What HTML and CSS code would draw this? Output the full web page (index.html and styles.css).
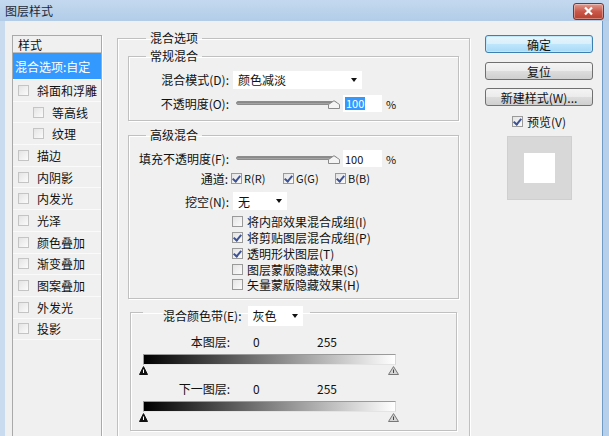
FILE: index.html
```html
<!DOCTYPE html>
<html lang="zh-CN">
<head>
  <meta charset="UTF-8">
  <title>图层样式</title>
  <link rel="stylesheet" href="styles.css">
</head>
<body>
  <div class="window">
    <div class="titlebar">
      <span class="title">图层样式</span>
      <span class="close">
        <svg width="11" height="10" viewBox="0 0 11 10"><path d="M2 1.5 L9 8.5 M9 1.5 L2 8.5" stroke="#fff" stroke-width="2.2"/></svg>
      </span>
    </div>
    <div class="frame">
      <div class="client">

        <ul class="styles">
          <li class="head">样式</li>
          <li class="sel">混合选项:自定</li>
          <li><span class="cb"></span>斜面和浮雕</li>
          <li class="sub"><span class="cb"></span>等高线</li>
          <li class="sub"><span class="cb"></span>纹理</li>
          <li><span class="cb"></span>描边</li>
          <li><span class="cb"></span>内阴影</li>
          <li><span class="cb"></span>内发光</li>
          <li><span class="cb"></span>光泽</li>
          <li><span class="cb"></span>颜色叠加</li>
          <li><span class="cb"></span>渐变叠加</li>
          <li><span class="cb"></span>图案叠加</li>
          <li><span class="cb"></span>外发光</li>
          <li><span class="cb"></span>投影</li>
        </ul>

        <fieldset class="group outer">
          <legend>混合选项</legend>

          <fieldset class="group normal">
            <legend>常规混合</legend>
            <div class="row first">
              <label class="lbl">混合模式(D):</label>
              <span class="select wide">颜色减淡<i class="arrow"></i></span>
            </div>
            <div class="row">
              <label class="lbl">不透明度(O):</label>
              <span class="slider"><span class="track"></span><span class="thumb"><svg width="12" height="9" viewBox="0 0 12 9"><path d="M0.5 8.5 L0.5 4.5 L6 0.7 L11.5 4.5 L11.5 8.5 Z" fill="#f4f4f4" stroke="#8a8a8a"/></svg></span></span>
              <span class="num"><span class="hl">100</span></span>
              <span class="pct">%</span>
            </div>
          </fieldset>

          <fieldset class="group advanced">
            <legend>高级混合</legend>
            <div class="row first">
              <label class="lbl">填充不透明度(F):</label>
              <span class="slider"><span class="track"></span><span class="thumb"><svg width="12" height="9" viewBox="0 0 12 9"><path d="M0.5 8.5 L0.5 4.5 L6 0.7 L11.5 4.5 L11.5 8.5 Z" fill="#f4f4f4" stroke="#8a8a8a"/></svg></span></span>
              <span class="num">100</span>
              <span class="pct">%</span>
            </div>
            <div class="row channels">
              <label class="lbl">通道:</label>
              <span class="chk"><span class="cb on"></span>R(R)</span>
              <span class="chk"><span class="cb on"></span>G(G)</span>
              <span class="chk"><span class="cb on"></span>B(B)</span>
            </div>
            <div class="row knock">
              <label class="lbl">挖空(N):</label>
              <span class="select narrow">无<i class="arrow"></i></span>
            </div>
            <div class="options">
              <span class="opt"><span class="cb"></span>将内部效果混合成组(I)</span>
              <span class="opt"><span class="cb on"></span>将剪贴图层混合成组(P)</span>
              <span class="opt"><span class="cb on"></span>透明形状图层(T)</span>
              <span class="opt"><span class="cb"></span>图层蒙版隐藏效果(S)</span>
              <span class="opt"><span class="cb"></span>矢量蒙版隐藏效果(H)</span>
            </div>
          </fieldset>

          <fieldset class="group band">
            <legend><span class="band-lbl">混合颜色带(E):</span><span class="select gray">灰色<i class="arrow"></i></span></legend>
            <div class="row lvl first">
              <label class="lbl">本图层:</label>
              <span class="v0">0</span>
              <span class="v255">255</span>
            </div>
            <div class="ramp"></div>
            <div class="marks">
              <svg width="9" height="9" viewBox="0 0 9 9"><path d="M4.5 0.6 L8.5 8.5 L0.5 8.5 Z" fill="#111" stroke="#111"/><path d="M4.5 3.5 V7" stroke="#fff"/></svg>
              <svg width="11" height="9" viewBox="0 0 11 9"><path d="M5.5 0.6 L10.5 8.5 L0.5 8.5 Z" fill="#d6d6d6" stroke="#777"/><path d="M5.5 3.5 V7" stroke="#444"/></svg>
            </div>
            <div class="row lvl">
              <label class="lbl">下一图层:</label>
              <span class="v0">0</span>
              <span class="v255">255</span>
            </div>
            <div class="ramp"></div>
            <div class="marks">
              <svg width="9" height="9" viewBox="0 0 9 9"><path d="M4.5 0.6 L8.5 8.5 L0.5 8.5 Z" fill="#111" stroke="#111"/><path d="M4.5 3.5 V7" stroke="#fff"/></svg>
              <svg width="11" height="9" viewBox="0 0 11 9"><path d="M5.5 0.6 L10.5 8.5 L0.5 8.5 Z" fill="#d6d6d6" stroke="#777"/><path d="M5.5 3.5 V7" stroke="#444"/></svg>
            </div>
          </fieldset>
        </fieldset>

        <div class="side">
          <button class="btn default">确定</button>
          <button class="btn">复位</button>
          <button class="btn">新建样式(W)...</button>
          <span class="preview-chk"><span class="cb on"></span>预览(V)</span>
          <div class="preview"><div class="swatch"></div></div>
        </div>

      </div>
    </div>
  </div>
</body>
</html>
```

FILE: styles.css
```css
* { box-sizing: border-box; margin: 0; padding: 0; }
html, body {
  width: 609px; height: 436px;
  overflow: hidden;
  font-family: "Noto Sans CJK SC", "Noto Sans", sans-serif;
  font-size: 12px;
  color: #111;
  background: #f0f0f0;
}
.window {
  width: 609px; height: 436px;
  display: flex; flex-direction: column;
}
.titlebar {
  height: 21px;
  flex: none;
  display: flex; align-items: center; justify-content: space-between;
  padding: 0 5px 0 5px;
  background: linear-gradient(#c4d9ef, #b2cce8);
}
.title {
  color: #1c2a3c;
  font-size: 12px;
  line-height: 14px;
}
.close {
  width: 31px; height: 17px;
  margin-top: 1px;
  display: flex; align-items: center; justify-content: center;
  border: 1px solid #7a3430;
  border-radius: 3px;
  background: linear-gradient(#e09c91, #c9584a 50%, #b8402f);
  box-shadow: inset 0 0 0 1px rgba(255,255,255,0.35);
}
.frame {
  flex: 1;
  display: flex;
  border-left: 5px solid #c9dbef;
  border-right: 6px solid #b6cfea;
}
.client {
  flex: 1;
  display: flex; align-items: flex-start;
  padding: 10px 0 0 7px;
  background: #f0f0f0;
  border-right: 1px solid #6f9bc4;
}

/* style list */
.styles {
  list-style: none;
  width: 90px;
  height: 420px;
  margin-top: 4px;
  border: 1px solid #a9a9a9;
  box-shadow: 1px 1px 0 #fff;
  background: #f0f0f0;
}
.styles li {
  height: 21.7px;
  display: flex; align-items: center;
  padding-left: 5px;
  border-bottom: 1px solid #fafafa;
  white-space: nowrap;
}
.styles li.head {
  height: 17px;
  padding-left: 5px;
  border-bottom: 1px solid #bdbdbd;
}
.styles li.sel {
  height: 27px;
  padding-left: 2px;
  background: #3399ff;
  color: #fff;
}
.styles li.sub { padding-left: 20px; }
.styles .cb { margin-right: 8px; border-color: #c4c4c4; }

/* checkbox */
.cb {
  display: inline-block;
  flex: none;
  width: 11px; height: 11px;
  border: 1px solid #9a9a9a;
  background: linear-gradient(135deg, #e4e4e4, #fbfbfb);
  position: relative;
}
.cb.on::after {
  content: "";
  position: absolute;
  left: 2px; top: 0px;
  width: 3px; height: 6px;
  border: solid #3d5396;
  border-width: 0 2px 2px 0;
  transform: rotate(40deg);
}

/* group boxes */
.group {
  border: 1px solid #c0c0c0;
  box-shadow: inset 1px 1px 0 #fff, 1px 1px 0 #fff;
}
.group legend {
  line-height: 14px;
  padding: 0 4px;
  margin-left: 17px;
}
.outer {
  width: 353px;
  height: 420px;
  margin-left: 15px;
  padding: 4px 10px 0 10px;
}
.outer > legend { margin-left: 18px; }
.normal { padding: 0 0 8px 0; }
.advanced { margin-top: 7px; padding: 0 0 5px 0; }
.band { margin: 1px 2px 0 2px; padding: 0 0 8px 0; }

.row {
  display: flex; align-items: center;
  margin-top: 7px;
  height: 17px;
}
.row.first { margin-top: 8px; }
.lbl {
  width: 100px;
  text-align: right;
  margin-right: 4px;
  white-space: nowrap;
}
.select {
  height: 18px;
  display: flex; align-items: center; justify-content: space-between;
  padding: 0 5px;
  background: #fff;
}
.select.wide { width: 129px; }
.select.narrow { width: 54px; }
.select.gray { width: 55px; height: 20px; }
.arrow {
  width: 0; height: 0;
  border-left: 3.5px solid transparent;
  border-right: 3.5px solid transparent;
  border-top: 4px solid #111;
}
.slider {
  width: 104px; height: 17px;
  position: relative;
}
.track {
  position: absolute;
  left: 3px; right: 0; top: 6px;
  height: 4px;
  border-radius: 2px;
  background: linear-gradient(#7d7d7d, #b0b0b0);
  border: 1px solid #8c8c8c;
}
.thumb {
  position: absolute;
  left: 95px; top: 5px;
  line-height: 0;
}
.num {
  width: 39px; height: 17px;
  margin-left: 6px;
  padding-left: 2px;
  display: flex; align-items: center;
  background: #fff;
  font-size: 11px;
}
.hl { background: #3399ff; color: #fff; line-height: 13px; padding: 0 1px; }
.pct { margin-left: 4px; font-size: 11px; }

.channels { margin-top: 3px; height: 16px; }
.channels .lbl { width: 99px; margin-right: 3px; }
.chk {
  display: flex; align-items: center;
  width: 52px;
  font-size: 11px;
}
.chk .cb { margin-right: 2px; }
.knock { margin-top: 6px; height: 18px; }

.options {
  display: flex; flex-direction: column;
  margin: 4px 0 0 103px;
}
.opt {
  height: 15.75px;
  display: flex; align-items: center;
  white-space: nowrap;
}
.opt .cb { margin-right: 4px; }

.band > legend {
  display: flex; align-items: center;
  margin-left: 12px;
  padding: 6px 7px 0 20px;
}
.band-lbl { margin-right: 6px; }
.lvl { height: 16px; margin-top: 9px; }
.lvl .lbl { width: 99px; margin-right: 0; }
.v0 { margin-left: 23px; width: 64px; }
.ramp {
  width: 253px; height: 11px;
  margin: 4px 0 0 12px;
  border: 1px solid #9a9a9a;
  border-right-color: #d8d8d8;
  border-bottom-color: #e4e4e4;
  background: linear-gradient(to right, #000, #fff);
}
.marks {
  width: 260px;
  margin: 1px 0 0 8px;
  display: flex; justify-content: space-between;
  line-height: 0;
}
.lvl + .ramp { margin-top: 4px; }
.marks + .lvl { margin-top: 6px; }

/* right column */
.side {
  width: 108px;
  margin: 4px 0 0 15px;
  display: flex; flex-direction: column; align-items: center;
}
.btn {
  width: 108px; height: 18px;
  font-family: inherit;
  font-size: 12px;
  color: #111;
  border: 1px solid #707070;
  border-radius: 3px;
  background: linear-gradient(#f4f4f4, #ebebeb 50%, #dddddd 51%, #cfcfcf);
  margin-bottom: 9px;
}
.btn.default {
  border-color: #3c7fb1;
  background: linear-gradient(#e8f5fc, #d9effa 50%, #bee6fd 51%, #a7d9f5);
  box-shadow: inset 0 0 0 1px #bfe6fb;
}
.btn + .btn { margin-bottom: 8px; }
.preview-chk {
  display: flex; align-items: center;
  margin-top: 0;
  height: 14px;
}
.preview-chk .cb { margin-right: 4px; }
.preview {
  width: 65px; height: 64px;
  margin-top: 8px;
  display: flex; align-items: center; justify-content: center;
  background: #d8d8d8;
  border: 1px solid #cfcfcf;
}
.swatch { width: 31px; height: 30px; background: #fff; }
```
